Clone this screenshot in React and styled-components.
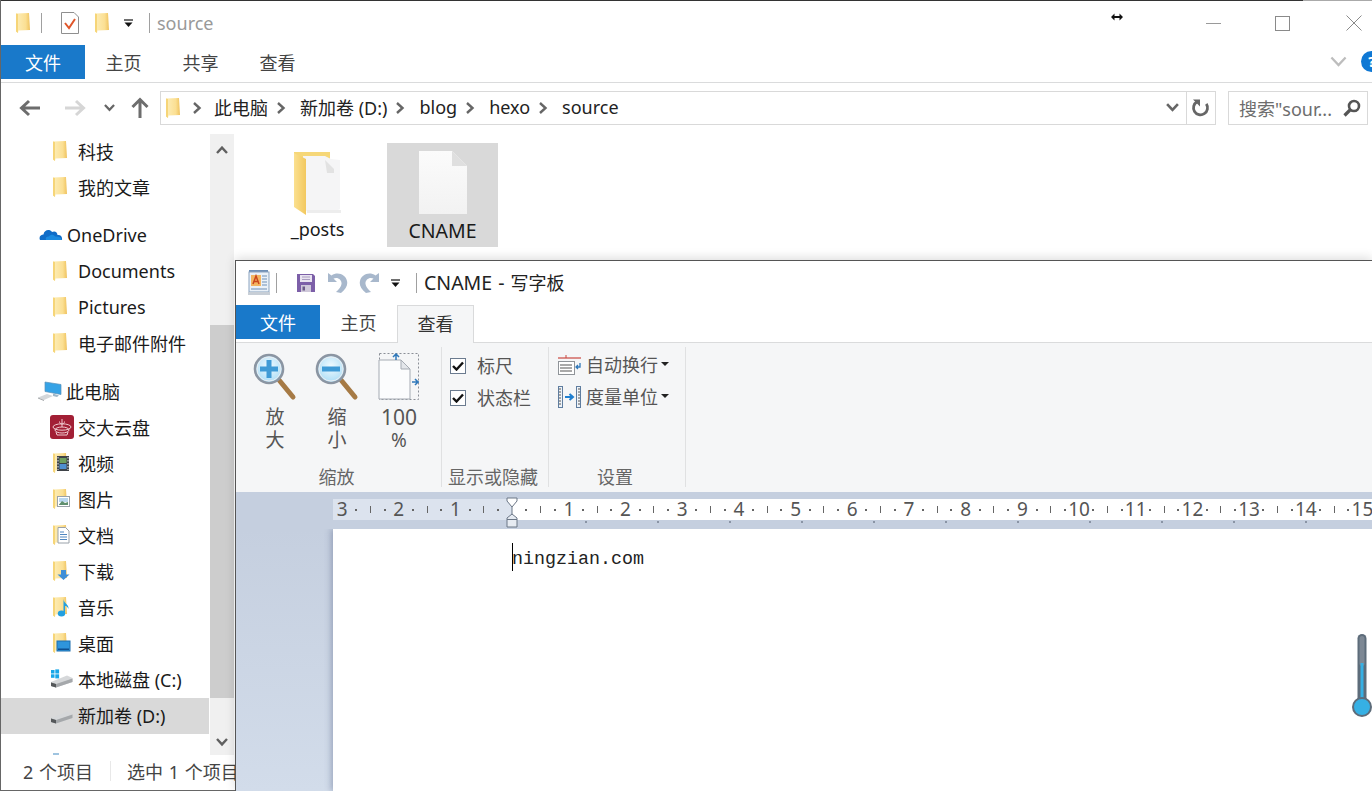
import React from 'react';
import styled, { createGlobalStyle } from 'styled-components';

const GlobalStyle = createGlobalStyle`
  html, body {
    margin: 0;
    padding: 0;
    background: #fff;
    overflow: hidden;
  }
  * {
    box-sizing: border-box;
  }
`;

const FONT = `"Noto Sans", "Noto Sans CJK SC", sans-serif`;

/* ---------- icons ---------- */

const Folder = () => (
  <svg width="24" height="24" viewBox="0 0 24 24">
    <defs>
      <linearGradient id="folderFill" x1="0" x2="1" y1="0" y2="0">
        <stop offset="0" stopColor="#fdeeb9" />
        <stop offset="0.7" stopColor="#fbdf92" />
        <stop offset="1" stopColor="#efc25e" />
      </linearGradient>
    </defs>
    <path d="M3 2.5 L16 2 L17 19 L5.5 19.5 L5 22 L3 20.5z" fill="url(#folderFill)" />
    <path d="M3 2.5 L5 3 V22 L3 20.5z" fill="#f6d578" />
  </svg>
);

const SpecialFolder = ({ kind }) => (
  <svg width="24" height="24" viewBox="0 0 24 24">
    <path d="M3 2.5 L16 2 L17 19 L5.5 19.5 L5 22 L3 20.5z" fill="url(#folderFill)" />
    <path d="M3 2.5 L5 3 V22 L3 20.5z" fill="#f6d578" />
    {kind === 'video' && (
      <g>
        <rect x="7" y="5" width="12" height="15" fill="#3f4348" />
        <rect x="9.5" y="7" width="7" height="5" fill="#6f9f5f" />
        <rect x="9.5" y="13" width="7" height="5" fill="#4f8fd0" />
        <path d="M8 6 v13 M18 6 v13" stroke="#c9ccd0" strokeWidth="1.2" strokeDasharray="1.5 1.5" />
      </g>
    )}
    {kind === 'picture' && (
      <g>
        <rect x="7.5" y="9.5" width="12" height="10" fill="#fff" stroke="#9aa2aa" />
        <rect x="9" y="11" width="9" height="4" fill="#b9d6ee" />
        <path d="M9 17.5 L12 14 L15 16 L18 15 V18 H9z" fill="#5f8f6f" />
      </g>
    )}
    {kind === 'doc' && (
      <g>
        <path d="M8 4.5 H15.5 L19 8 V20 H8z" fill="#fff" stroke="#9aa2aa" />
        <path d="M10 9 H14 M10 11.5 H17 M10 14 H17 M10 16.5 H17" stroke="#4f86bf" strokeWidth="1" />
      </g>
    )}
    {kind === 'download' && (
      <path d="M11 11 H16 V15.5 H19.5 L13.5 21 L7.5 15.5 H11z" fill="#3f8fd8" />
    )}
    {kind === 'music' && (
      <g>
        <ellipse cx="11.5" cy="18.5" rx="3.7" ry="3" fill="#22a0e0" />
        <path d="M13.5 18 V4 C14 9 19 9 18.5 14 C17.5 11.5 16 11 15 11 V18z" fill="#22a0e0" />
      </g>
    )}
    {kind === 'desktop' && (
      <g>
        <rect x="7" y="10" width="13" height="10" fill="#2f95dc" stroke="#1f6fae" />
        <rect x="8" y="17.5" width="11" height="1.5" fill="#0f4f8f" />
      </g>
    )}
  </svg>
);

const Drive = ({ windows }) => (
  <svg width="24" height="24" viewBox="0 0 24 24">
    <path d="M1 15 L17 8.5 L22.5 11 V15 L6 20.5 L1 19z" fill="#d6d8da" />
    <path d="M1 15.5 L6 17 L22.5 11.5 V15 L6 20.5 L1 19z" fill="#a5a8ab" />
    <path d="M1 15.5 L6 17 V20.5 L1 19z" fill="#55585a" />
    {windows && (
      <g fill="#19a7e8">
        <rect x="1" y="3" width="3.5" height="3.5" />
        <rect x="5.3" y="2.4" width="3.8" height="4.1" />
        <rect x="1" y="7.3" width="3.5" height="3.5" />
        <rect x="5.3" y="7.3" width="3.8" height="4.1" />
      </g>
    )}
  </svg>
);

const CloudDisk = () => (
  <svg width="24" height="24" viewBox="0 0 24 24">
    <rect width="24" height="24" rx="3" fill="#a21f35" />
    <g fill="none" stroke="#f0c9cf" strokeWidth="1">
      <ellipse cx="12" cy="12" rx="9" ry="3.2" />
      <ellipse cx="12" cy="15" rx="7" ry="3" />
      <path d="M12 4 V12 M9.5 6.5 C9.5 10 14.5 10 14.5 6.5" />
      <path d="M6 17 L7 20 H17 L18 17" />
    </g>
  </svg>
);

const OneDrive = () => (
  <svg width="24" height="24" viewBox="0 0 24 24">
    <path d="M1 17 C-0.5 13.5 2 11.5 4.5 11.5 C5 7 10.5 5.5 13 9 C16 7.5 18.5 9.5 18.5 12 C21.5 11.5 23.5 13.5 23 17z" fill="#0f6cc8" />
    <path d="M7 17 C6 14.5 8 13 10 13.5 C11 11 15 11 16 13.5 C19 13 22 14 23 17z" fill="#1a8ae0" />
  </svg>
);

const ThisPc = () => (
  <svg width="24" height="24" viewBox="0 0 24 24">
    <path d="M7 3 L23 5.5 V15.5 L7 12.5z" fill="#36a3e6" stroke="#5a90b8" strokeWidth="0.7" />
    <path d="M15 14.5 L15 17 L19 18 L21 16.5z" fill="#9fb7c8" />
    <path d="M0 18.5 L9 15 L15 17 L6 21z" fill="#d4d7da" />
    <path d="M0 18.5 L6 21 L6 22 L0 19.5z" fill="#a0a3a6" />
  </svg>
);

const NetworkTop = () => (
  <svg width="24" height="24" viewBox="0 0 24 24">
    <rect x="3" y="3" width="6" height="8" fill="#9fc4e0" />
  </svg>
);

const BigFolder = () => (
  <svg width="50" height="65" viewBox="0 0 50 65">
    <defs>
      <linearGradient id="bigFolderFill" x1="0" x2="1" y1="0" y2="0">
        <stop offset="0" stopColor="#fbe08f" />
        <stop offset="1" stopColor="#f2c85f" />
      </linearGradient>
    </defs>
    <path d="M1 1 H37 V12 H1z" fill="#f6d778" />
    <path d="M10 5 H32 L38 8 L47 9 V58 L43 60 H12z" fill="#f5f5f6" />
    <path d="M32 9 L41 18 V22 H34z" fill="#e2e2e2" />
    <path d="M14 59 H48 V62 H14z" fill="#ededed" />
    <path d="M1 2 L13 8 L13 64 L1 56z" fill="url(#bigFolderFill)" />
  </svg>
);

const FileIcon = () => (
  <svg width="48" height="64" viewBox="0 0 48 64">
    <defs>
      <linearGradient id="fileFill" x1="0" x2="0" y1="0" y2="1">
        <stop offset="0" stopColor="#fbfbfb" />
        <stop offset="1" stopColor="#f2f2f2" />
      </linearGradient>
    </defs>
    <path d="M0 0 H33 L48 15 V63 H0z" fill="url(#fileFill)" />
    <path d="M33 0 L48 15 H33z" fill="#dfdfdf" />
  </svg>
);

const TaskDoc = () => (
  <svg width="18" height="22" viewBox="0 0 18 22">
    <path d="M0.5 0.5 H13 L17.5 5 V21.5 H0.5z" fill="#fff" stroke="#8f8f8f" />
    <path d="M4 11 L8 16 L14 7" fill="none" stroke="#e0562a" strokeWidth="2" />
  </svg>
);

const QuickCaret = () => (
  <svg width="9" height="9" viewBox="0 0 9 9">
    <path d="M0 1 H9" stroke="#111" strokeWidth="1.2" />
    <path d="M0.5 3.5 H8.5 L4.5 8z" fill="#111" />
  </svg>
);

const BackArrow = ({ color }) => (
  <svg width="24" height="20" viewBox="0 0 24 20">
    <path d="M22 10 H4 M11 3 L3.5 10 L11 17" fill="none" stroke={color} strokeWidth="3" />
  </svg>
);

const ForwardArrow = ({ color }) => (
  <svg width="24" height="20" viewBox="0 0 24 20">
    <path d="M2 10 H20 M13 3 L20.5 10 L13 17" fill="none" stroke={color} strokeWidth="3" />
  </svg>
);

const UpArrow = () => (
  <svg width="20" height="22" viewBox="0 0 20 22">
    <path d="M10 21 V3 M2.5 10 L10 2.5 L17.5 10" fill="none" stroke="#6d6d6d" strokeWidth="3" />
  </svg>
);

const Chevron = ({ color = '#666', width = 12, stroke = 2.4 }) => (
  <svg width={width} height={width * 0.7} viewBox="0 0 12 8.4">
    <path d="M1 1 L6 6.4 L11 1" fill="none" stroke={color} strokeWidth={stroke} />
  </svg>
);

const CrumbArrow = () => (
  <svg width="10" height="14" viewBox="0 0 10 14">
    <path d="M2 2 L7.5 7 L2 12" fill="none" stroke="#666" strokeWidth="2.4" />
  </svg>
);

const Refresh = () => (
  <svg width="20" height="20" viewBox="0 0 20 20">
    <path d="M14.5 5 A7 7 0 1 1 5 4.5" fill="none" stroke="#666" strokeWidth="2.8" transform="rotate(10 10 10)" />
    <path d="M2 1.5 H9 V8.5z" fill="#666" />
  </svg>
);

const SearchGlass = () => (
  <svg width="18" height="18" viewBox="0 0 18 18">
    <circle cx="11" cy="7" r="5" fill="none" stroke="#555" strokeWidth="2.6" />
    <path d="M7.5 10.5 L1.5 16.5" stroke="#555" strokeWidth="3.2" />
  </svg>
);

const ResizeCursor = () => (
  <svg width="12" height="8" viewBox="0 0 12 8">
    <path d="M0 4 L3.5 0.5 V3 H8.5 V0.5 L12 4 L8.5 7.5 V5 H3.5 V7.5z" fill="#111" />
  </svg>
);

const WordPadLogo = () => (
  <svg width="22" height="28" viewBox="0 0 22 28">
    <rect x="1" y="1" width="19" height="3" fill="#6f8fb5" />
    <rect x="1" y="3" width="20" height="20" fill="#eaf1f8" stroke="#8ba3bf" />
    <rect x="3" y="6" width="10" height="11" fill="#f3b562" />
    <path d="M5 15 L8 7 L11 15 M6 12.5 H10" fill="none" stroke="#c9461e" strokeWidth="1.5" />
    <path d="M14 7 H19 M14 10 H19 M14 13 H19 M14 16 H19 M3 20 H19" stroke="#6f8fb5" />
    <rect x="0" y="23" width="22" height="3" fill="#c7ced6" />
  </svg>
);

const SaveIcon = () => (
  <svg width="18" height="18" viewBox="0 0 18 18">
    <path d="M0 0 H16 L18 2 V18 H0z" fill="#7c5fa8" />
    <rect x="3" y="1" width="12" height="7" fill="#e8e3f0" />
    <path d="M5 3 H13 M5 5.5 H13" stroke="#a99cc0" />
    <rect x="4" y="11" width="10" height="7" fill="#cfc8da" />
    <rect x="5.5" y="12.5" width="2.5" height="4" fill="#6a5a88" />
  </svg>
);

const UndoIcon = ({ flip }) => (
  <svg width="21" height="22" viewBox="0 0 21 22">
    <g transform={flip ? 'translate(21 0) scale(-1 1)' : undefined}>
      <path d="M1 1 L1 10 L10 10 L6.5 6.5 C11 4.5 15 8 14.5 12 C14.2 15 12 17 9 20 L14 21 C19 17 21 13 20 9 C19 3 11 -1 4.5 3.5z" fill="#a8b8cc" />
    </g>
  </svg>
);

const ZoomGlass = ({ plus }) => (
  <svg width="44" height="48" viewBox="0 0 44 48">
    <defs>
      <radialGradient id="lens" cx="0.5" cy="0.4" r="0.6">
        <stop offset="0" stopColor="#f1fbff" />
        <stop offset="1" stopColor="#a9dcf6" />
      </radialGradient>
    </defs>
    <path d="M26 27 L40 44" stroke="#a67a45" strokeWidth="5" strokeLinecap="round" />
    <circle cx="16" cy="16" r="14" fill="url(#lens)" stroke="#8b95a2" strokeWidth="2.6" />
    <circle cx="16" cy="16" r="12" fill="none" stroke="#e9edf1" strokeWidth="1" />
    <path d="M7 16 H25" stroke="#3f9bd6" strokeWidth="5" />
    {plus && <path d="M16 7 V25" stroke="#3f9bd6" strokeWidth="5" />}
  </svg>
);

const PageFit = () => (
  <svg width="42" height="48" viewBox="0 0 42 48">
    <rect x="1.5" y="0.5" width="39" height="46" fill="none" stroke="#8a8f96" strokeDasharray="2 2" />
    <path d="M1 7 H23 L32 16 V46 H1z" fill="#fbfcfd" stroke="#a5abb3" />
    <path d="M23 7 L32 16 H23z" fill="#e3e6ea" stroke="#a5abb3" />
    <path d="M18 7 V1 M15 4 L18 1 L21 4" stroke="#2f78ba" strokeWidth="1.5" fill="none" />
    <path d="M34 29 H41 M37 26 L40 29 L37 32" stroke="#2f78ba" strokeWidth="1.5" fill="none" />
  </svg>
);

const WrapIcon = () => (
  <svg width="24" height="22" viewBox="0 0 24 22">
    <path d="M0 4 H23" stroke="#c9473f" strokeWidth="1.2" />
    <path d="M8 1 V4" stroke="#c9473f" />
    <rect x="0.5" y="7.5" width="16" height="13" fill="#fff" stroke="#8f9499" />
    <path d="M2 11 H14 M2 14 H14 M2 17 H14" stroke="#555" strokeWidth="1.2" />
    <path d="M22 9 V13 H18 M20 11 L18 13 L20 15" fill="none" stroke="#2f78ba" strokeWidth="1.3" />
  </svg>
);

const MeasureIcon = () => (
  <svg width="24" height="22" viewBox="0 0 24 22">
    <rect x="0.5" y="0.5" width="4" height="21" fill="#eef3f8" stroke="#5f7d9f" />
    <rect x="18.5" y="0.5" width="4" height="21" fill="#eef3f8" stroke="#5f7d9f" />
    <path d="M1 3 H3 M1 6 H3 M1 9 H3 M1 12 H3 M1 15 H3 M1 18 H3 M20 3 H22 M20 6 H22 M20 9 H22 M20 12 H22 M20 15 H22 M20 18 H22" stroke="#555" />
    <path d="M7 11 H14 M11.5 8 L15 11 L11.5 14" fill="none" stroke="#1f7fd0" strokeWidth="2" />
  </svg>
);

const CheckMark = () => (
  <svg width="12" height="10" viewBox="0 0 12 10">
    <path d="M1 5 L4.5 8.5 L11 1.5" fill="none" stroke="#111" strokeWidth="2.4" />
  </svg>
);

const Thermometer = () => (
  <svg width="20" height="86" viewBox="0 0 20 86">
    <rect x="5.5" y="1" width="9" height="72" rx="4.5" fill="#5d6c7a" />
    <rect x="7.5" y="3" width="5" height="30" rx="2.5" fill="#7d8894" />
    <rect x="8.5" y="30" width="3" height="42" fill="#36b0e4" />
    <circle cx="10" cy="74" r="9" fill="#36b0e4" stroke="#5d6c7a" strokeWidth="2" />
  </svg>
);

const RulerMarker = () => (
  <svg width="12" height="31" viewBox="0 0 12 31">
    <path d="M1 1 H11 V4 L6 10 L1 4z" fill="#fff" stroke="#6b7686" />
    <path d="M6 17 L11 21 V30 H1 V21z" fill="#e6ebf2" stroke="#6b7686" />
    <path d="M1 22.5 H11" stroke="#6b7686" />
    <path d="M6 10 V17" stroke="#6b7686" />
  </svg>
);

/* ---------- explorer ---------- */

const Desktop = styled.div`
  position: relative;
  width: 1372px;
  height: 791px;
  overflow: hidden;
  background: #fff;
  font-family: ${FONT};
  font-size: 18px;
`;

const Explorer = styled.div`
  display: flex;
  flex-direction: column;
  height: 100%;
  border-left: 1px solid #666;
  border-bottom: 1px solid #666;
`;

const TopEdge = styled.div`
  height: 1px;
  flex: none;
  background: linear-gradient(90deg, #333 95%, #aaa 95%);
`;

const TitleBar = styled.div`
  display: flex;
  align-items: center;
  height: 44px;
  flex: none;
  padding-left: ${p => p.$pad}px;
`;

const QuickSlot = styled.span`
  display: flex;
  align-items: center;
  flex: none;
  margin-left: ${p => p.$ml || 0}px;
`;

const TitleSep = styled.span`
  width: 1px;
  height: 20px;
  flex: none;
  background: #a0a0a0;
  margin-left: ${p => p.$ml || 0}px;
`;

const WindowTitle = styled.span`
  margin-left: 7px;
  margin-top: ${p => (p.$raised ? '-2px' : '0')};
  font-size: 18px;
  color: ${p => (p.$dim ? '#999' : '#222')};
  white-space: nowrap;
`;

const Caps = styled.span`
  font-size: 19.5px;
  word-spacing: 1px;
`;

const Controls = styled.div`
  display: flex;
  align-items: center;
  margin-left: auto;
  height: 100%;
  position: relative;
  width: 261px;
`;

const CursorMark = styled.span`
  position: absolute;
  left: 0;
  top: 12px;
  display: flex;
`;

const MinButton = styled.span`
  width: 15px;
  height: 1px;
  background: #9a9a9a;
  margin-left: 95px;
`;

const MaxButton = styled.span`
  width: 15px;
  height: 15px;
  border: 1px solid #8a8a8a;
  margin-left: 54px;
`;

const CloseButton = styled.span`
  display: flex;
  margin-left: 56px;
`;

const TabBar = styled.div`
  display: flex;
  align-items: flex-start;
  height: 38px;
  flex: none;
  border-bottom: 1px solid #dadbdc;
  position: relative;
`;

const FileTab = styled.div`
  width: ${p => p.$w}px;
  height: 34px;
  background: #1979ca;
  color: #fff;
  display: flex;
  align-items: center;
  justify-content: center;
`;

const Tab = styled.div`
  width: 77px;
  height: ${p => (p.$active ? '38px' : '34px')};
  display: flex;
  align-items: center;
  justify-content: center;
  color: ${p => (p.$active ? '#333' : '#444')};
  background: ${p => (p.$active ? '#f5f6f7' : 'transparent')};
  border: ${p => (p.$active ? '1px solid #d9dadb' : 'none')};
  border-bottom: none;
  padding-bottom: ${p => (p.$active ? '4px' : '0')};
`;

const RibbonToggle = styled.div`
  position: absolute;
  right: 0;
  top: 6px;
  display: flex;
  align-items: center;
  gap: 14px;
  margin-right: -10px;
`;

const HelpDot = styled.span`
  width: 21px;
  height: 21px;
  border-radius: 50%;
  background: #0f78d4;
  color: #fff;
  font-size: 14px;
  font-weight: 700;
  line-height: 21px;
  text-align: center;
`;

const AddressRow = styled.div`
  display: flex;
  align-items: center;
  height: 51px;
  flex: none;
  padding: 8px 3px 9px 17px;
`;

const NavButton = styled.span`
  display: flex;
  justify-content: center;
  align-items: center;
  flex: none;
  width: ${p => p.$w}px;
  margin-left: ${p => p.$ml || 0}px;
`;

const AddressBar = styled.div`
  display: flex;
  align-items: center;
  height: 34px;
  width: 1056px;
  margin-left: 8px;
  border: 1px solid #d9d9d9;
  padding-left: 2px;
  flex: none;
  color: #222;
`;

const Crumb = styled.span`
  white-space: nowrap;
  padding-bottom: 2px;
`;

const CrumbSep = styled.span`
  display: flex;
  margin: ${p => (p.$first ? '0 12px 0 5px' : '0 14px 0 8px')};
`;

const BarEnd = styled.div`
  display: flex;
  align-items: center;
  margin-left: auto;
  height: 100%;
`;

const RefreshBox = styled.span`
  display: flex;
  align-items: center;
  justify-content: center;
  width: 29px;
  height: 100%;
  border-left: 1px solid #d9d9d9;
  margin-left: 7px;
`;

const SearchBox = styled.div`
  display: flex;
  align-items: center;
  justify-content: space-between;
  width: 140px;
  height: 34px;
  margin-left: 12px;
  padding: 0 6px 0 10px;
  border: 1px solid #d9d9d9;
  color: #6d6d6d;
  flex: none;
  white-space: nowrap;
`;

const ExplorerBody = styled.div`
  display: flex;
  flex: 1;
  min-height: 0;
`;

const Sidebar = styled.div`
  width: 209px;
  flex: none;
  overflow: hidden;
`;

const NavRow = styled.div`
  display: flex;
  align-items: center;
  height: 36px;
  width: 208px;
  padding-left: ${p => p.$indent || 49}px;
  padding-bottom: 2px;
  margin-top: ${p => p.$gap || 0}px;
  background: ${p => (p.$selected ? '#d9d9d9' : 'transparent')};
  color: #1a1a1a;
  white-space: nowrap;
`;

const NavIcon = styled.span`
  display: flex;
  flex: none;
  width: 28px;
`;

const NavScroll = styled.div`
  display: flex;
  flex-direction: column;
  width: 24px;
  flex: none;
  background: #f0f0f0;
`;

const ScrollButton = styled.div`
  display: flex;
  align-items: center;
  justify-content: center;
  height: ${p => p.$h}px;
  flex: none;
  padding: ${p => (p.$up ? '0 0 2px' : '2px 0 0')};
  transform: ${p => (p.$up ? 'scaleY(-1)' : 'none')};
`;

const ScrollTrack = styled.div`
  flex: 1;
  padding-top: 161px;
`;

const ScrollThumb = styled.div`
  height: 373px;
  background: #cdcdcd;
`;

const Content = styled.div`
  display: flex;
  align-items: flex-start;
  gap: 14px;
  flex: 1;
  padding: 9px 0 0 28px;
`;

const Tile = styled.div`
  display: flex;
  flex-direction: column;
  align-items: center;
  width: 111px;
  height: 104px;
  padding-top: 8px;
  background: ${p => (p.$selected ? '#d9d9d9' : 'transparent')};
  color: #1a1a1a;
`;

const TileIcon = styled.span`
  display: flex;
  height: 66px;
`;

const StatusBar = styled.div`
  display: flex;
  align-items: center;
  height: 35px;
  flex: none;
  padding: 0 0 3px 22px;
  color: #444;
  white-space: nowrap;
  word-spacing: 1px;
`;

const StatusSep = styled.span`
  width: 1px;
  height: 20px;
  background: #e8e8e8;
  margin: 0 16px 0 17px;
`;

/* ---------- wordpad ---------- */

const WordPad = styled.div`
  position: absolute;
  left: 235px;
  top: 260px;
  right: 0;
  bottom: 0;
  display: flex;
  flex-direction: column;
  background: #fff;
  border-top: 1px solid #555;
  border-left: 1px solid #555;
  box-shadow: 0 -2px 10px rgba(0, 0, 0, 0.14);
  overflow: hidden;
`;

const Ribbon = styled.div`
  display: flex;
  height: 149px;
  flex: none;
  padding: 4px 0 5px;
  background: #f5f6f7;
`;

const Group = styled.div`
  display: flex;
  flex-direction: column;
  width: ${p => p.$w}px;
  flex: none;
  border-right: 1px solid #e0e1e2;
`;

const GroupBody = styled.div`
  flex: 1;
  display: flex;
  flex-direction: ${p => (p.$column ? 'column' : 'row')};
  padding: ${p => p.$pad};
`;

const GroupLabel = styled.div`
  height: 20px;
  line-height: 20px;
  padding-right: 4px;
  text-align: center;
  color: #666;
  white-space: nowrap;
`;

const BigButton = styled.div`
  display: flex;
  flex-direction: column;
  align-items: center;
  width: 62px;
  color: #555;
  font-size: 19px;
  line-height: 23px;
`;

const BigIcon = styled.span`
  display: flex;
  height: 48px;
  margin-bottom: 5px;
`;

const BigDigits = styled.span`
  font-size: 21px;
`;

const CheckRow = styled.div`
  display: flex;
  align-items: center;
  height: 32px;
  gap: 11px;
  color: #555;
  white-space: nowrap;
`;

const RowLabel = styled.span`
  padding-bottom: 2px;
`;

const CheckBox = styled.span`
  display: flex;
  align-items: center;
  justify-content: center;
  width: 16px;
  height: 16px;
  border: 1px solid #6b7b8f;
  background: #fff;
`;

const MenuRow = styled.div`
  display: flex;
  align-items: center;
  height: 32px;
  color: #555;
  white-space: nowrap;
`;

const MenuIcon = styled.span`
  display: flex;
  width: 28px;
  flex: none;
`;

const MenuCaret = styled.span`
  width: 0;
  height: 0;
  margin: 0 0 2px 3px;
  border-left: 4px solid transparent;
  border-right: 4px solid transparent;
  border-top: 4px solid #222;
`;

const RulerRow = styled.div`
  position: relative;
  height: 37px;
  flex: none;
  padding: 7px 0 9px 97px;
  background: #c5cfdf;
`;

const RulerTrack = styled.div`
  display: flex;
  height: 21px;
  padding-left: 2px;
  background: linear-gradient(90deg, #dce3ee 179px, #fff 179px);
`;

const RulerCell = styled.div`
  display: grid;
  grid-template-columns: repeat(4, 14.175px);
  align-items: center;
  justify-items: center;
  width: 56.7px;
  flex: none;
  color: #555;
  font-size: 19px;
  line-height: 1;
`;

const RulerDot = styled.span`
  width: ${p => (p.$long ? '1px' : '2px')};
  height: ${p => (p.$long ? '7px' : '2px')};
  background: #666;
`;

const MarkerSlot = styled.span`
  position: absolute;
  left: 270px;
  top: 5px;
  display: flex;
`;

const RulerStops = styled.div`
  position: absolute;
  left: 349px;
  top: 29px;
  display: flex;
  gap: 70px;
`;

const RulerStop = styled.span`
  width: 2px;
  height: 2px;
  flex: none;
  background: #8a94a5;
`;

const DocArea = styled.div`
  flex: 1;
  display: flex;
  padding-left: 97px;
  background: linear-gradient(180deg, #c5cfdf 0%, #d2dcea 100%);
`;

const Page = styled.div`
  flex: 1;
  padding: 14px 0 0 179px;
  background: #fff;
  box-shadow: -2px 0 6px rgba(90, 105, 140, 0.45);
`;

const PageLine = styled.div`
  display: flex;
  align-items: center;
  height: 28px;
  font-family: "Liberation Mono", monospace;
  font-size: 18.33px;
  color: #222;
`;

const PageText = styled.span`
  padding-top: 4px;
`;

const Caret = styled.span`
  width: 1px;
  height: 28px;
  margin-right: -1px;
  background: #000;
  flex: none;
`;

const ThermoSlot = styled.div`
  position: absolute;
  right: 0;
  top: 633px;
  display: flex;
`;

/* ---------- data ---------- */

const navRows = [
  { text: '科技', icon: <Folder /> },
  { text: '我的文章', icon: <Folder /> },
  { text: 'OneDrive', icon: <OneDrive />, indent: 38, gap: 12 },
  { text: 'Documents', icon: <Folder /> },
  { text: 'Pictures', icon: <Folder /> },
  { text: '电子邮件附件', icon: <Folder /> },
  { text: '此电脑', icon: <ThisPc />, indent: 37, gap: 12 },
  { text: '交大云盘', icon: <CloudDisk /> },
  { text: '视频', icon: <SpecialFolder kind="video" /> },
  { text: '图片', icon: <SpecialFolder kind="picture" /> },
  { text: '文档', icon: <SpecialFolder kind="doc" /> },
  { text: '下载', icon: <SpecialFolder kind="download" /> },
  { text: '音乐', icon: <SpecialFolder kind="music" /> },
  { text: '桌面', icon: <SpecialFolder kind="desktop" /> },
  { text: '本地磁盘 (C:)', icon: <Drive windows /> },
  { text: '新加卷 (D:)', icon: <Drive />, selected: true },
  { text: '', icon: <NetworkTop />, gap: 11 },
];

const rulerLabels = ['3', '2', '1', '', '1', '2', '3', '4', '5', '6', '7', '8', '9', '10', '11', '12', '13', '14', '15'];

const rulerStops = Array.from({ length: 11 }, (_, i) => i);

const crumbs = ['此电脑', '新加卷 (D:)', 'blog', 'hexo', 'source'];

const App = () => {
  return (
    <Desktop>
      <GlobalStyle />
      <Explorer>
        <TopEdge />
        <TitleBar $pad={12}>
          <QuickSlot><Folder /></QuickSlot>
          <TitleSep $ml={4} />
          <QuickSlot $ml={19}><TaskDoc /></QuickSlot>
          <QuickSlot $ml={13}><Folder /></QuickSlot>
          <QuickSlot $ml={8}><QuickCaret /></QuickSlot>
          <TitleSep $ml={16} />
          <WindowTitle $dim>source</WindowTitle>
          <Controls>
            <CursorMark><ResizeCursor /></CursorMark>
            <MinButton />
            <MaxButton />
            <CloseButton>
              <svg width="16" height="16" viewBox="0 0 16 16">
                <path d="M0.5 0.5 L15.5 15.5 M15.5 0.5 L0.5 15.5" stroke="#8a8a8a" />
              </svg>
            </CloseButton>
          </Controls>
        </TitleBar>
        <TabBar>
          <FileTab $w={84}>文件</FileTab>
          <Tab>主页</Tab>
          <Tab>共享</Tab>
          <Tab>查看</Tab>
          <RibbonToggle>
            <Chevron color="#bdbdbd" width={17} stroke={1.6} />
            <HelpDot>?</HelpDot>
          </RibbonToggle>
        </TabBar>
        <AddressRow>
          <NavButton $w={24}><BackArrow color="#6d6d6d" /></NavButton>
          <NavButton $w={24} $ml={21}><ForwardArrow color="#d6d6d6" /></NavButton>
          <NavButton $w={16} $ml={14}><Chevron width={11} /></NavButton>
          <NavButton $w={24} $ml={11}><UpArrow /></NavButton>
          <AddressBar>
            <QuickSlot><Folder /></QuickSlot>
            {crumbs.map((crumb, i) => (
              <React.Fragment key={crumb}>
                <CrumbSep $first={i === 0}><CrumbArrow /></CrumbSep>
                <Crumb>{crumb}</Crumb>
              </React.Fragment>
            ))}
            <BarEnd>
              <Chevron width={13} />
              <RefreshBox><Refresh /></RefreshBox>
            </BarEnd>
          </AddressBar>
          <SearchBox>
            搜索"sour...
            <SearchGlass />
          </SearchBox>
        </AddressRow>
        <ExplorerBody>
          <Sidebar>
            {navRows.map((row, i) => (
              <NavRow key={i} $indent={row.indent} $gap={row.gap} $selected={row.selected}>
                <NavIcon>{row.icon}</NavIcon>
                {row.text}
              </NavRow>
            ))}
          </Sidebar>
          <NavScroll>
            <ScrollButton $h={30} $up><Chevron width={12} color="#606060" /></ScrollButton>
            <ScrollTrack><ScrollThumb /></ScrollTrack>
            <ScrollButton $h={27}><Chevron width={12} color="#606060" /></ScrollButton>
          </NavScroll>
          <Content>
            <Tile>
              <TileIcon><BigFolder /></TileIcon>
              _posts
            </Tile>
            <Tile $selected>
              <TileIcon><FileIcon /></TileIcon>
              <Caps>CNAME</Caps>
            </Tile>
          </Content>
        </ExplorerBody>
        <StatusBar>
          2 个项目
          <StatusSep />
          选中 1 个项目
        </StatusBar>
      </Explorer>

      <WordPad>
        <TitleBar $pad={12}>
          <QuickSlot><WordPadLogo /></QuickSlot>
          <TitleSep $ml={6} />
          <QuickSlot $ml={20}><SaveIcon /></QuickSlot>
          <QuickSlot $ml={12}><UndoIcon /></QuickSlot>
          <QuickSlot $ml={11}><UndoIcon flip /></QuickSlot>
          <QuickSlot $ml={11}><QuickCaret /></QuickSlot>
          <TitleSep $ml={16} />
          <WindowTitle $raised><Caps>CNAME - </Caps>写字板</WindowTitle>
        </TitleBar>
        <TabBar>
          <FileTab $w={84}>文件</FileTab>
          <Tab>主页</Tab>
          <Tab $active>查看</Tab>
        </TabBar>
        <Ribbon>
          <Group $w={206}>
            <GroupBody $pad="6px 0 0 8px">
              <BigButton>
                <BigIcon><ZoomGlass plus /></BigIcon>
                <span>放</span>
                <span>大</span>
              </BigButton>
              <BigButton>
                <BigIcon><ZoomGlass /></BigIcon>
                <span>缩</span>
                <span>小</span>
              </BigButton>
              <BigButton>
                <BigIcon><PageFit /></BigIcon>
                <BigDigits>100</BigDigits>
                <span>%</span>
              </BigButton>
            </GroupBody>
            <GroupLabel>缩放</GroupLabel>
          </Group>
          <Group $w={107}>
            <GroupBody $column $pad="3px 0 0 8px">
              <CheckRow><CheckBox><CheckMark /></CheckBox><RowLabel>标尺</RowLabel></CheckRow>
              <CheckRow><CheckBox><CheckMark /></CheckBox><RowLabel>状态栏</RowLabel></CheckRow>
            </GroupBody>
            <GroupLabel>显示或隐藏</GroupLabel>
          </Group>
          <Group $w={137}>
            <GroupBody $column $pad="2px 0 0 9px">
              <MenuRow><MenuIcon><WrapIcon /></MenuIcon><RowLabel>自动换行</RowLabel><MenuCaret /></MenuRow>
              <MenuRow><MenuIcon><MeasureIcon /></MenuIcon><RowLabel>度量单位</RowLabel><MenuCaret /></MenuRow>
            </GroupBody>
            <GroupLabel>设置</GroupLabel>
          </Group>
        </Ribbon>
        <RulerRow>
          <RulerTrack>
            {rulerLabels.map((label, i) => (
              <RulerCell key={i}>
                <span>{label}</span>
                <RulerDot />
                <RulerDot $long />
                <RulerDot />
              </RulerCell>
            ))}
          </RulerTrack>
          <MarkerSlot><RulerMarker /></MarkerSlot>
          <RulerStops>
            {rulerStops.map(i => <RulerStop key={i} />)}
          </RulerStops>
        </RulerRow>
        <DocArea>
          <Page>
            <PageLine>
              <Caret />
              <PageText>ningzian.com</PageText>
            </PageLine>
          </Page>
        </DocArea>
      </WordPad>

      <ThermoSlot><Thermometer /></ThermoSlot>
    </Desktop>
  );
};

export default App;
